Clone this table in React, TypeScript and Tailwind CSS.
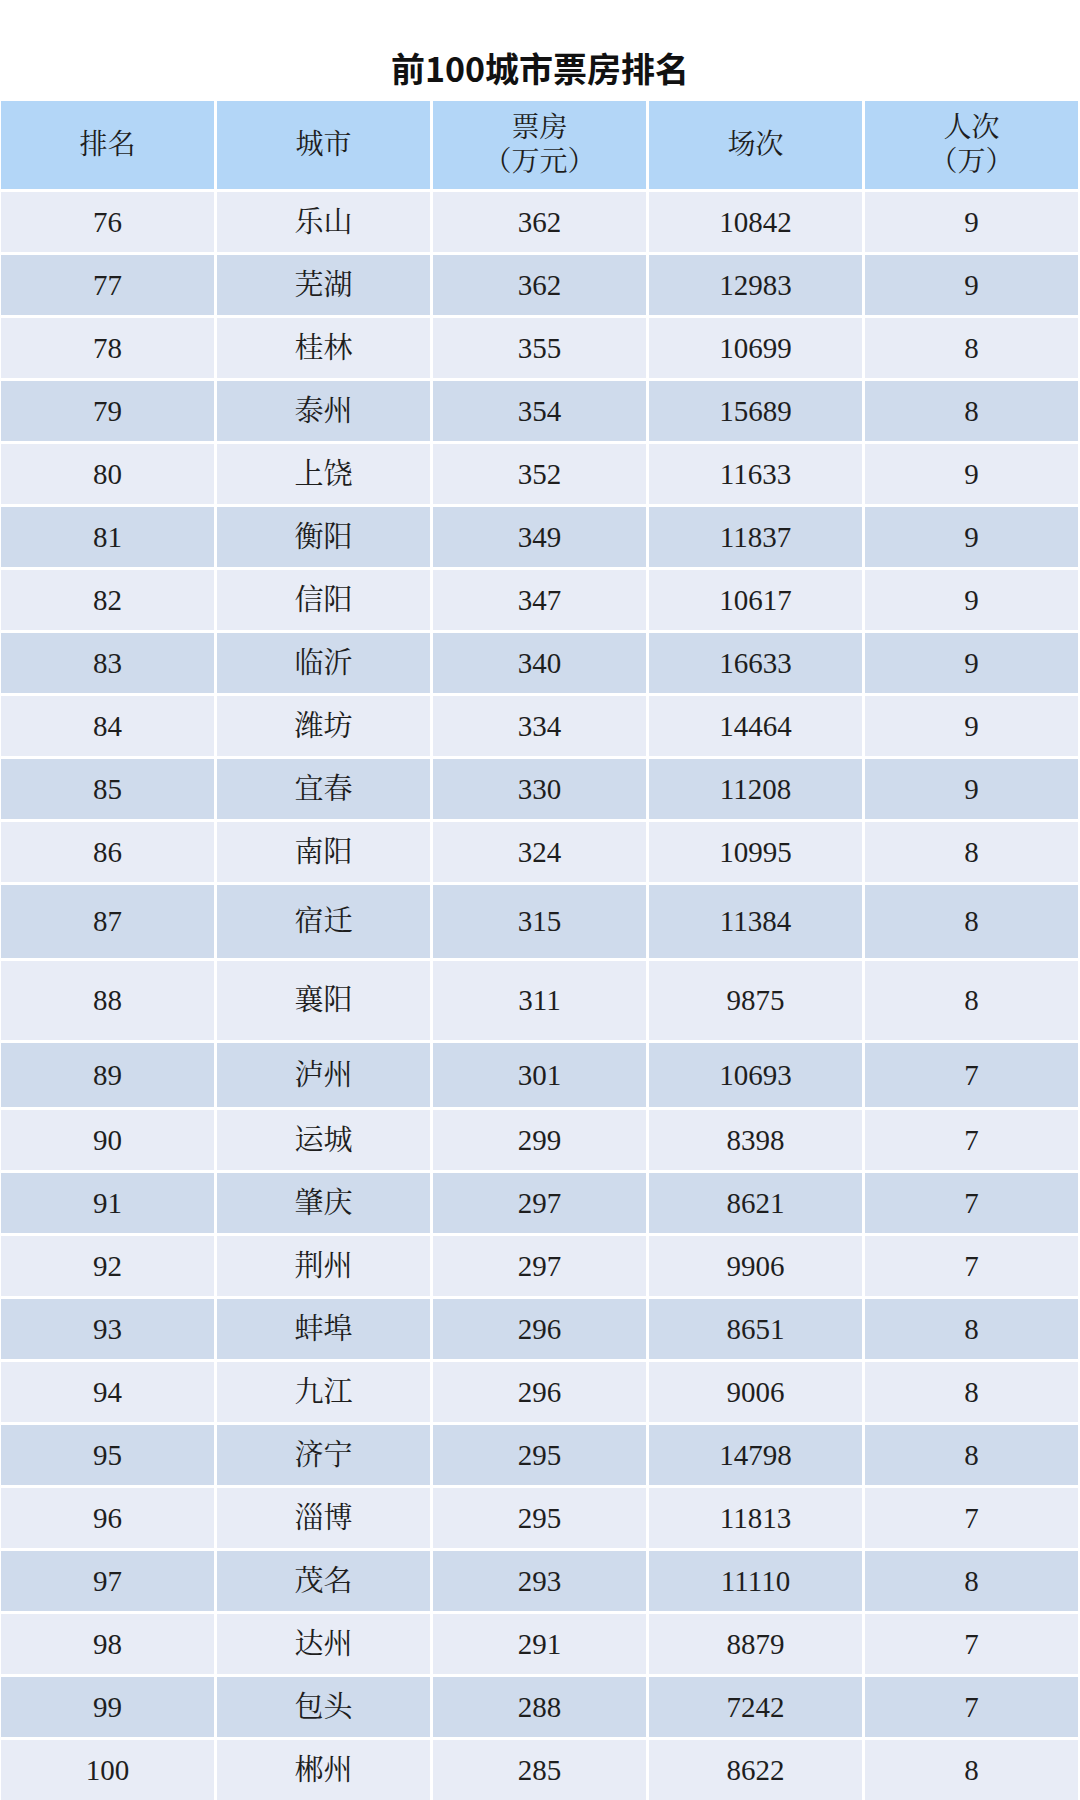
const rows: [string, string, string, string, string][] = [
  ["76", "乐山", "362", "10842", "9"],
  ["77", "芜湖", "362", "12983", "9"],
  ["78", "桂林", "355", "10699", "8"],
  ["79", "泰州", "354", "15689", "8"],
  ["80", "上饶", "352", "11633", "9"],
  ["81", "衡阳", "349", "11837", "9"],
  ["82", "信阳", "347", "10617", "9"],
  ["83", "临沂", "340", "16633", "9"],
  ["84", "潍坊", "334", "14464", "9"],
  ["85", "宜春", "330", "11208", "9"],
  ["86", "南阳", "324", "10995", "8"],
  ["87", "宿迁", "315", "11384", "8"],
  ["88", "襄阳", "311", "9875", "8"],
  ["89", "泸州", "301", "10693", "7"],
  ["90", "运城", "299", "8398", "7"],
  ["91", "肇庆", "297", "8621", "7"],
  ["92", "荆州", "297", "9906", "7"],
  ["93", "蚌埠", "296", "8651", "8"],
  ["94", "九江", "296", "9006", "8"],
  ["95", "济宁", "295", "14798", "8"],
  ["96", "淄博", "295", "11813", "7"],
  ["97", "茂名", "293", "11110", "8"],
  ["98", "达州", "291", "8879", "7"],
  ["99", "包头", "288", "7242", "7"],
  ["100", "郴州", "285", "8622", "8"],
];

// a few rows in the source image are taller than the rest
function rowHeight(rank: string) {
  if (rank === "87") return "h-[73px]";
  if (rank === "88") return "h-[79px]";
  if (rank === "89") return "h-[64px]";
  return "h-[60px]";
}

const cellFont =
  "font-['Liberation_Serif','Noto_Serif_CJK_SC','Noto_Sans_CJK_SC',serif] text-[29px] text-[#1e1e1e]";

export default function App() {
  return (
    <div className="min-h-[1800px] w-[1080px] bg-white">
      {/* Title */}
      <h1 className="pt-[48px] pb-[13px] text-center font-['Noto_Sans_CJK_SC',sans-serif] text-[34px] font-bold leading-[40px] text-[#111]">
        前100城市票房排名
      </h1>

      {/* Table */}
      <div className={`ml-[1px] flex w-[1077px] flex-col gap-[3px] ${cellFont}`}>
        <div className="grid h-[88px] grid-cols-5 gap-[3px]">
          {[["排名"], ["城市"], ["票房", "（万元）"], ["场次"], ["人次", "（万）"]].map(
            (lines, i) => (
              <div
                key={i}
                className="flex flex-col items-center justify-center bg-[#b3d6f7] text-[28px] leading-[34px]"
              >
                {lines.map((l) => (
                  <span key={l}>{l}</span>
                ))}
              </div>
            )
          )}
        </div>

        {rows.map((r, i) => (
          <div
            key={r[0]}
            className={`grid grid-cols-5 gap-[3px] ${rowHeight(r[0])}`}
          >
            {r.map((v, j) => (
              <div
                key={j}
                className={`flex items-center justify-center leading-none ${
                  i % 2 === 0 ? "bg-[#e8ecf6]" : "bg-[#cfdbec]"
                }`}
              >
                {v}
              </div>
            ))}
          </div>
        ))}
      </div>
    </div>
  );
}
